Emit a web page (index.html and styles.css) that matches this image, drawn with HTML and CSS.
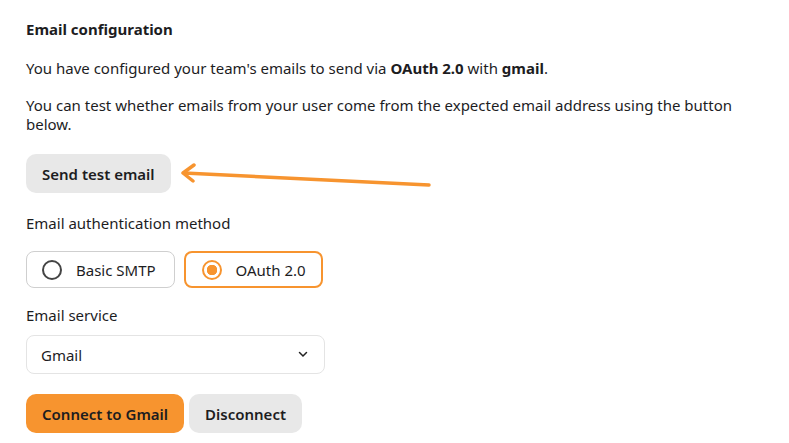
FILE: index.html
```html
<!DOCTYPE html>
<html lang="en">
<head>
    <meta charset="UTF-8">
    <meta name="viewport" content="width=device-width, initial-scale=1.0">
    <title>Email configuration</title>
    <link rel="stylesheet" href="styles.css">
</head>
<body>
<div class="settings">
    <h3 class="title">Email configuration</h3>
    <p class="text">You have configured your team's emails to send via <b>OAuth 2.0</b> with <b>gmail</b>.</p>
    <p class="text">You can test whether emails from your user come from the expected email address using the button below.</p>

    <div class="test-row">
        <button class="btn btn-gray">Send test email</button>
        <svg class="arrow" width="260" height="30" viewBox="0 0 260 30">
            <path d="M4 10 L249 22" stroke="#f7942f" stroke-width="3.5" stroke-linecap="round" fill="none"/>
            <path d="M14 2 L3 10 L13 18" stroke="#f7942f" stroke-width="3.5" stroke-linecap="round" stroke-linejoin="round" fill="none"/>
        </svg>
    </div>

    <div class="label">Email authentication method</div>
    <div class="radios">
        <label class="radio">
            <span class="dot"></span>
            Basic SMTP
        </label>
        <label class="radio active">
            <span class="dot"></span>
            OAuth 2.0
        </label>
    </div>

    <div class="label">Email service</div>
    <div class="select">
        <span>Gmail</span>
        <svg width="10" height="7" viewBox="0 0 10 7"><path d="M1.5 1.5 L5 5 L8.5 1.5" stroke="#222" stroke-width="1.5" fill="none" stroke-linecap="round"/></svg>
    </div>

    <div class="actions">
        <button class="btn btn-orange">Connect to Gmail</button>
        <button class="btn btn-gray">Disconnect</button>
    </div>
</div>
</body>
</html>
```

FILE: styles.css
```css
* {
    margin: 0;
    padding: 0;
    box-sizing: border-box;
    font-family: 'Noto Sans', sans-serif;
}

body {
    background: #fff;
    color: #1d1d1f;
}

.settings {
    padding: 19px 26px;
    width: 770px;
    font-size: 15px;
}

.title {
    font-size: 15px;
    font-weight: 700;
    line-height: 20px;
    margin-bottom: 20px;
}

.text {
    line-height: 19px;
    margin-bottom: 18px;
}

.text b {
    font-weight: 700;
}

.test-row {
    position: relative;
    margin-top: 20px;
    margin-bottom: 20px;
}

.arrow {
    position: absolute;
    left: 154px;
    top: 9px;
}

.btn {
    border: none;
    border-radius: 10px;
    height: 39px;
    padding: 0 16px;
    font-size: 15px;
    font-weight: 600;
    color: #1d1d1f;
    cursor: pointer;
}

.btn-gray {
    background: #e8e8e8;
}

.btn-orange {
    background: #f7942f;
}

.label {
    line-height: 20px;
    margin-bottom: 18px;
}

.radios {
    display: flex;
    gap: 9px;
    margin-bottom: 17px;
}

.radio {
    display: flex;
    align-items: center;
    gap: 14px;
    height: 37px;
    padding: 0 18px 0 15px;
    border: 1px solid #cfcfcf;
    border-radius: 8px;
    font-size: 15px;
}

.radio.active {
    border: 2px solid #f7942f;
    padding: 0 15px 0 16px;
}

.dot {
    width: 20px;
    height: 20px;
    border-radius: 50%;
    border: 2px solid #444;
}

.radio.active .dot {
    border-color: #f7942f;
    background: radial-gradient(circle, #f7942f 0 5px, #fff 5.5px);
}

.select {
    display: flex;
    justify-content: space-between;
    align-items: center;
    width: 299px;
    height: 39px;
    padding: 0 16px 0 14px;
    border: 1px solid #e4e4e4;
    border-radius: 8px;
    margin-top: -8px;
    margin-bottom: 20px;
}

.actions {
    display: flex;
    gap: 5px;
}
```
